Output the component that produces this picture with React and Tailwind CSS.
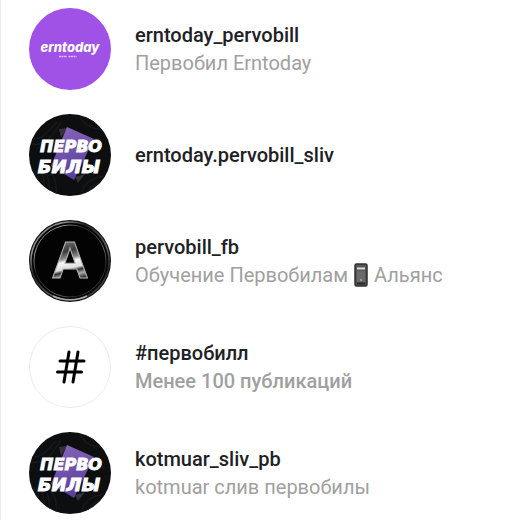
import React from 'react'

const ErntodayAvatar = () => (
  <svg viewBox="0 0 82 82" className="block size-full" aria-hidden="true">
    <circle cx="41" cy="41" r="41" fill="#a052e6" />
    <text
      x="41"
      y="44"
      textAnchor="middle"
      className="font-['Inter',sans-serif] text-[13px] font-extrabold italic"
      fill="#fff"
    >
      erntoday
    </text>
    <path d="M30 48.5h8M39.5 48.5h8" stroke="#dcc0f5" strokeWidth="1.5" strokeDasharray="2 .5" />
  </svg>
)

const PervobillyAvatar = ({ id }) => (
  <svg viewBox="0 0 82 82" className="block size-full" aria-hidden="true">
    <defs>
      <linearGradient id={`${id}-card`} x1="0" y1="0" x2="0.3" y2="1">
        <stop offset="0" stopColor="#8a68bd" />
        <stop offset="1" stopColor="#59409b" />
      </linearGradient>
      <clipPath id={`${id}-clip`}>
        <circle cx="41" cy="41" r="41" />
      </clipPath>
    </defs>
    <g clipPath={`url(#${id}-clip)`}>
      <rect width="82" height="82" fill="#0d0e10" />
      <g fill="none" stroke="#17191b" strokeWidth="1.5">
        <path d="M-2 22c14 8 20-4 30-14M-2 28c16 8 24-4 34-20M50 0c4 12 14 16 34 16M56 0c4 8 14 11 28 11" />
        <path d="M2 56c8 0 8 12 6 26M8 56c8 2 8 14 6 26M15 58c6 4 6 14 5 24M22 60c5 4 6 12 5 22" />
        <path d="M52 82c2-14 12-20 30-20M58 82c2-10 10-15 26-15M64 82c2-7 8-10 20-10" />
      </g>
      <path d="M30 15l8-1-6 10zM46 63l10-3-7 9z" fill="#343238" />
      <path d="M38 13l27 12-20 41-23-14z" fill={`url(#${id}-card)`} />
      <g
        className="font-['DejaVu_Sans',sans-serif] font-bold italic"
        fill="#fff"
        stroke="#fff"
        strokeWidth="1"
        textAnchor="middle"
      >
        <text x="42" y="38" className="text-[16px]">ПЕРВО</text>
        <text x="40" y="59" className="text-[18px]">БИЛЫ</text>
      </g>
    </g>
  </svg>
)

const AllianceAvatar = () => (
  <svg viewBox="0 0 82 82" className="block size-full" aria-hidden="true">
    <defs>
      <linearGradient id="rim" x1="0" y1="0" x2="1" y2="1">
        <stop offset="0" stopColor="#444" />
        <stop offset="0.2" stopColor="#999" />
        <stop offset="0.35" stopColor="#222" />
        <stop offset="0.65" stopColor="#666" />
        <stop offset="0.8" stopColor="#222" />
        <stop offset="1" stopColor="#888" />
      </linearGradient>
      <linearGradient id="chrome" x1="0" y1="0" x2="0.15" y2="1">
        <stop offset="0.2" stopColor="#777" />
        <stop offset="0.4" stopColor="#3c3c3c" />
        <stop offset="0.52" stopColor="#8a8a8a" />
        <stop offset="0.58" stopColor="#f8f8f8" />
        <stop offset="0.7" stopColor="#dedede" />
        <stop offset="0.75" stopColor="#303030" />
        <stop offset="0.82" stopColor="#aaa" />
        <stop offset="0.9" stopColor="#333" />
      </linearGradient>
    </defs>
    <circle cx="41" cy="41" r="41" fill="#171717" />
    <circle cx="41" cy="41" r="39" fill="#050505" stroke="url(#rim)" strokeWidth="1.5" />
    <circle cx="41" cy="41" r="36" fill="#030303" stroke="url(#rim)" strokeWidth="1" />
    <path d="M24 76c10 5 24 5 34 0" fill="none" stroke="#aaa" strokeWidth="1.5" />
    <text
      x="41"
      y="58"
      textAnchor="middle"
      className="font-['Liberation_Sans',sans-serif] text-[52px] font-bold not-italic"
      fill="url(#chrome)"
      stroke="#b4b4b4"
      strokeWidth="1"
    >
      A
    </text>
  </svg>
)

const HashtagAvatar = () => (
  <svg viewBox="0 0 82 82" className="block size-full" aria-hidden="true">
    <circle cx="41" cy="41" r="40.5" fill="#fff" stroke="#ebebeb" />
    <path
      d="M40 26l-5 30M49 26l-5 30M31 35h24M28.5 46h24"
      fill="none"
      stroke="#000"
      strokeWidth="3"
      strokeLinecap="round"
    />
  </svg>
)

const PhoneIcon = () => (
  <svg viewBox="0 0 14 24" className="mx-1.5 inline-block h-6 w-3.5 align-[-5px]" aria-hidden="true">
    <rect x="1" y="1" width="12" height="22" rx="1.5" fill="#555" stroke="#303030" strokeWidth="1.5" />
    <path d="M3 5.5h8" stroke="#ddd" strokeWidth="2" />
    <path d="M3 8h8v11H3z" fill="#6a6a6e" />
    <path d="M6 17h2" stroke="#a9a9c2" strokeWidth="1.5" />
    <path d="M3 20.5h8" stroke="#292929" strokeWidth="2" />
  </svg>
)

const results = [
  {
    title: 'erntoday_pervobill',
    subtitle: 'Первобил Erntoday',
    avatar: <ErntodayAvatar />,
  },
  {
    title: 'erntoday.pervobill_sliv',
    avatar: <PervobillyAvatar id="sliv" />,
  },
  {
    title: 'pervobill_fb',
    subtitle: <>Обучение Первобилам<PhoneIcon />Альянс</>,
    avatar: <AllianceAvatar />,
  },
  {
    title: '#первобилл',
    subtitle: 'Менее 100 публикаций',
    subtitleClass: 'font-medium',
    avatar: <HashtagAvatar />,
  },
  {
    title: 'kotmuar_sliv_pb',
    subtitle: 'kotmuar слив первобилы',
    avatar: <PervobillyAvatar id="kotmuar" />,
  },
]

const ResultRow = ({ title, subtitle, subtitleClass = '', avatar }) => (
  <li>
    <a href="#" className="flex items-center gap-6">
      <span className="size-[82px] shrink-0">{avatar}</span>
      <span className="min-w-0 text-xl leading-7">
        <span className="block truncate font-medium text-[#202124]">{title}</span>
        {subtitle && (
          <span className={`block truncate text-[#a0a0a0] ${subtitleClass}`}>{subtitle}</span>
        )}
      </span>
    </a>
  </li>
)

const App = () => (
  <main className="min-h-screen border-l border-[#ececec] bg-white pt-2 pr-4 pb-1 pl-7 font-['Roboto',sans-serif]">
    <ul className="flex flex-col gap-6">
      {results.map((result) => (
        <ResultRow key={result.title} {...result} />
      ))}
    </ul>
  </main>
)

export default App
